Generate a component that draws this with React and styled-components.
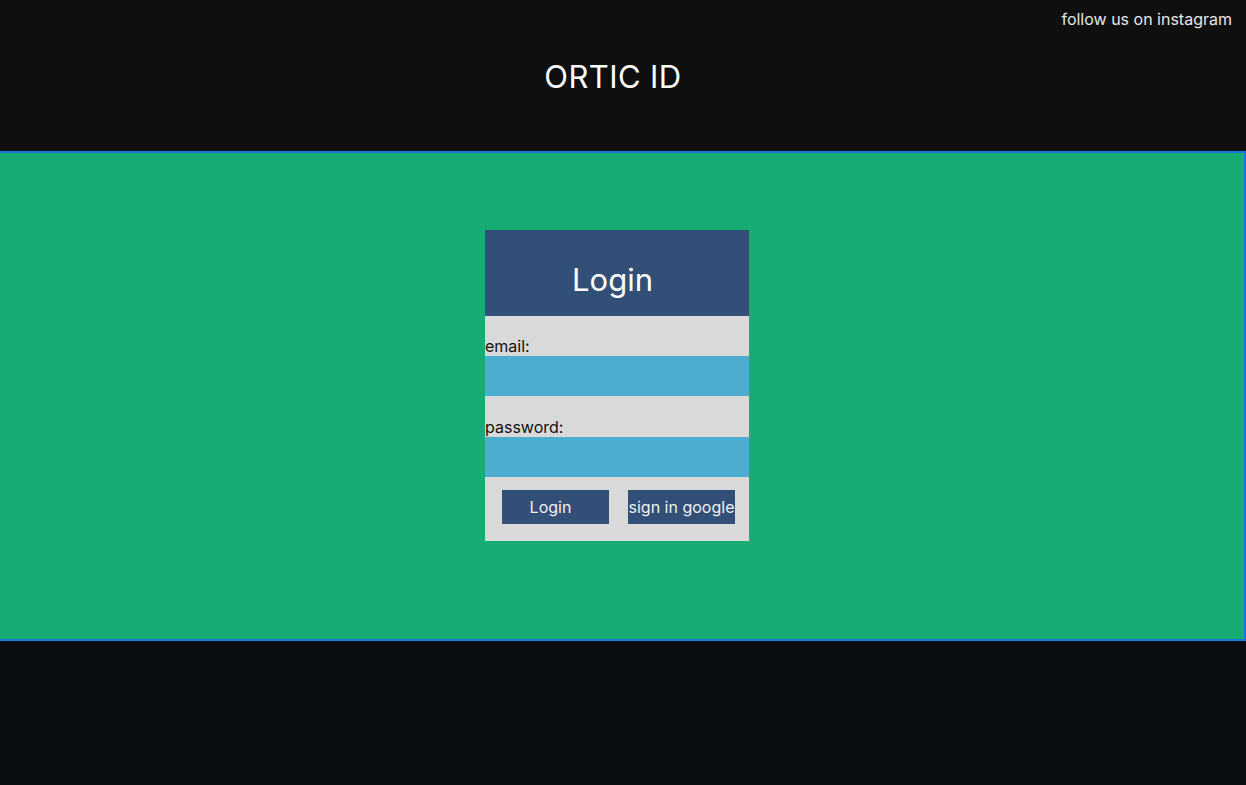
import React from "react";
import styled, { createGlobalStyle } from "styled-components";

const Global = createGlobalStyle`
  html, body { margin: 0; padding: 0; }
  body {
    font-family: Inter, "Liberation Sans", sans-serif;
    background: #0a0d11;
  }
  * { box-sizing: border-box; }
`;

const Page = styled.div`
  display: flex;
  flex-direction: column;
  width: 1246px;
  height: 785px;
  background: #0a0d11;
`;

const Header = styled.header`
  position: relative;
  height: 151px;
  background: #0e0f0e;
  display: flex;
  align-items: center;
  justify-content: center;
  padding-right: 20px;
  padding-top: 2px;
`;

const Brand = styled.h1`
  margin: 0;
  font-size: 31px;
  font-weight: 400;
  color: #ffffff;
  letter-spacing: 0.4px;
`;

const InstaLink = styled.a`
  position: absolute;
  top: 9px;
  right: 14px;
  font-size: 16px;
  color: #e6e6e6;
  text-decoration: none;
`;

const Main = styled.main`
  height: 490px;
  background: #17ac74;
  border-top: 2px solid #1778e0;
  border-right: 2px solid #1778e0;
  border-bottom: 2px solid #1778e0;
  display: flex;
  justify-content: center;
  align-items: flex-start;
  padding-top: 77px;
  padding-right: 10px;
`;

const Card = styled.form`
  width: 264px;
  background: #d9d9d9;
  display: flex;
  flex-direction: column;
`;

const CardHeader = styled.div`
  height: 86px;
  background: #324f77;
  display: flex;
  align-items: center;
  justify-content: center;
  padding-right: 9px;
  padding-top: 13px;
`;

const CardTitle = styled.h2`
  margin: 0;
  font-size: 31px;
  font-weight: 400;
  color: #ffffff;
`;

const Label = styled.label`
  display: block;
  font-size: 16px;
  line-height: 19px;
  color: #111;
  margin-top: ${(p) => p.$top}px;
`;

const Input = styled.input`
  display: block;
  width: 100%;
  height: 40px;
  border: none;
  outline: none;
  background: #4cadcf;
  padding: 0 6px;
  font-family: inherit;
  font-size: 16px;
`;

const ButtonRow = styled.div`
  display: flex;
  gap: 19px;
  padding: 13px 0 17px 17px;
`;

const Button = styled.button`
  width: 107px;
  height: 34px;
  border: none;
  background: #324f77;
  color: #f0f0f0;
  font-family: inherit;
  font-size: 16px;
  padding: 0 ${(p) => p.$padRight}px 0 0;
  white-space: nowrap;
  overflow: hidden;
  display: flex;
  align-items: center;
  justify-content: center;
`;

export default function App() {
  return (
    <>
      <Global />
      <Page>
        <Header>
          <Brand>ORTIC ID</Brand>
          <InstaLink href="#">follow us on instagram</InstaLink>
        </Header>
        <Main>
          <Card onSubmit={(e) => e.preventDefault()}>
            <CardHeader>
              <CardTitle>Login</CardTitle>
            </CardHeader>
            <Label $top={21} htmlFor="email">email:</Label>
            <Input id="email" type="email" />
            <Label $top={22} htmlFor="password">password:</Label>
            <Input id="password" type="password" />
            <ButtonRow>
              <Button type="submit" $padRight={10}>Login</Button>
              <Button type="button" $padRight={0}>sign in google</Button>
            </ButtonRow>
          </Card>
        </Main>
      </Page>
    </>
  );
}
